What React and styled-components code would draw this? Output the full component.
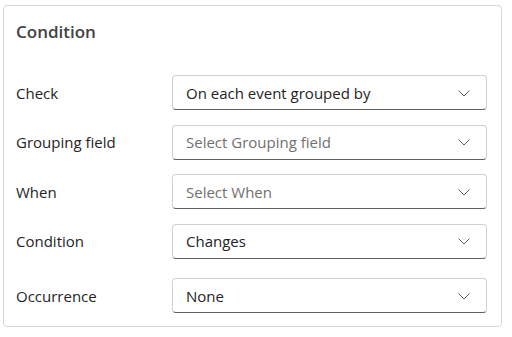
import React from 'react';
import styled, { createGlobalStyle } from 'styled-components';

const GlobalStyle = createGlobalStyle`
    body {
        margin: 0;
        background: #ffffff;
        font-family: 'Open Sans', 'Noto Sans', sans-serif;
    }
`;

const Card = styled.section`
    box-sizing: border-box;
    width: 499px;
    margin: 5px 0 0 3px;
    padding: 15px 14px 13px 12px;
    border: 1px solid #d6d6d6;
    border-radius: 4px;
    background: #ffffff;
`;

const Title = styled.h2`
    margin: 0 0 32px 0;
    font-size: 17px;
    line-height: 22px;
    font-weight: 600;
    color: #424242;
`;

const Form = styled.div`
    display: grid;
    grid-template-columns: 156px 1fr;
    row-gap: 14.5px;
    align-items: center;
`;

const Label = styled.label`
    font-size: 15px;
    color: #242424;
    margin-top: ${(p) => (p.$spaced ? '5px' : '0')};
`;

const Select = styled.div`
    box-sizing: border-box;
    height: 35px;
    display: flex;
    align-items: center;
    justify-content: space-between;
    padding: 0 15px 0 13px;
    border: 1px solid #d1d1d1;
    border-bottom-color: #616161;
    border-radius: 4px;
    font-size: 15px;
    color: ${(p) => (p.$placeholder ? '#707070' : '#242424')};
    margin-top: ${(p) => (p.$spaced ? '5px' : '0')};
`;

const Chevron = () => (
    <svg width="14" height="14" viewBox="0 0 14 14" fill="none">
        <path d="M1.5 4.5 L7 10 L12.5 4.5" stroke="#616161" strokeWidth="1" />
    </svg>
);

const rows = [
    { label: 'Check', value: 'On each event grouped by' },
    { label: 'Grouping field', value: 'Select Grouping field', placeholder: true },
    { label: 'When', value: 'Select When', placeholder: true },
    { label: 'Condition', value: 'Changes' },
    { label: 'Occurrence', value: 'None', spaced: true },
];

const App = () => (
    <>
        <GlobalStyle />
        <Card>
            <Title>Condition</Title>
            <Form>
                {rows.map((r) => (
                    <React.Fragment key={r.label}>
                        <Label $spaced={r.spaced}>{r.label}</Label>
                        <Select $placeholder={r.placeholder} $spaced={r.spaced}>
                            <span>{r.value}</span>
                            <Chevron />
                        </Select>
                    </React.Fragment>
                ))}
            </Form>
        </Card>
    </>
);

export default App;
